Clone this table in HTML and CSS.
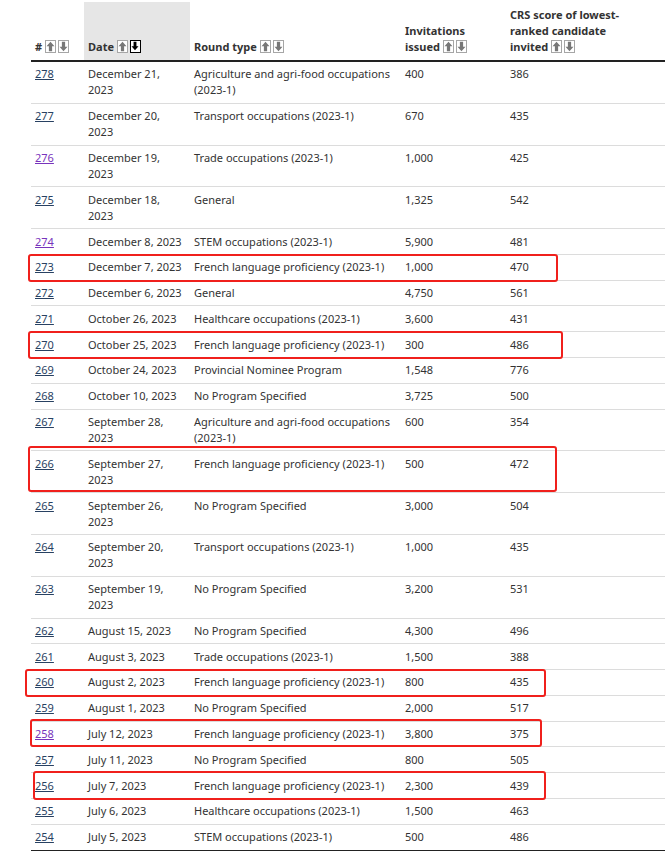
FILE: index.html
```html
<!DOCTYPE html>
<html lang="en">
<head>
<meta charset="utf-8">
<title>Rounds of invitations</title>
<link rel="stylesheet" href="styles.css">
</head>
<body>
<div class="page">
<table class="rounds">
  <colgroup>
    <col class="c-num"><col class="c-date"><col class="c-type"><col class="c-inv"><col class="c-crs">
  </colgroup>
  <thead>
    <tr>
      <th>#<span class="sorts"><span class="sort"><svg viewBox="0 0 10 12"><path d="M5 0.8 L9.4 5.6 H6.8 V11.2 H3.2 V5.6 H0.6 Z"/></svg></span><span class="sort"><svg viewBox="0 0 10 12"><path d="M5 11.2 L9.4 6.4 H6.8 V0.8 H3.2 V6.4 H0.6 Z"/></svg></span></span></th>
      <th class="sorted">Date<span class="sorts"><span class="sort"><svg viewBox="0 0 10 12"><path d="M5 0.8 L9.4 5.6 H6.8 V11.2 H3.2 V5.6 H0.6 Z"/></svg></span><span class="sort active"><svg viewBox="0 0 10 12"><path d="M5 11.2 L9.4 6.4 H6.8 V0.8 H3.2 V6.4 H0.6 Z"/></svg></span></span></th>
      <th>Round type<span class="sorts"><span class="sort"><svg viewBox="0 0 10 12"><path d="M5 0.8 L9.4 5.6 H6.8 V11.2 H3.2 V5.6 H0.6 Z"/></svg></span><span class="sort"><svg viewBox="0 0 10 12"><path d="M5 11.2 L9.4 6.4 H6.8 V0.8 H3.2 V6.4 H0.6 Z"/></svg></span></span></th>
      <th>Invitations issued<span class="sorts"><span class="sort"><svg viewBox="0 0 10 12"><path d="M5 0.8 L9.4 5.6 H6.8 V11.2 H3.2 V5.6 H0.6 Z"/></svg></span><span class="sort"><svg viewBox="0 0 10 12"><path d="M5 11.2 L9.4 6.4 H6.8 V0.8 H3.2 V6.4 H0.6 Z"/></svg></span></span></th>
      <th><div class="crs-head">CRS score of lowest-ranked candidate invited<span class="sorts"><span class="sort"><svg viewBox="0 0 10 12"><path d="M5 0.8 L9.4 5.6 H6.8 V11.2 H3.2 V5.6 H0.6 Z"/></svg></span><span class="sort"><svg viewBox="0 0 10 12"><path d="M5 11.2 L9.4 6.4 H6.8 V0.8 H3.2 V6.4 H0.6 Z"/></svg></span></span></div></th>
    </tr>
  </thead>
  <tbody>
    <tr><td><a href="#">278</a></td><td>December 21, 2023</td><td>Agriculture and agri-food occupations (2023-1)</td><td>400</td><td>386</td></tr>
    <tr><td><a href="#">277</a></td><td>December 20, 2023</td><td>Transport occupations (2023-1)</td><td>670</td><td>435</td></tr>
    <tr><td><a href="#" class="visited">276</a></td><td>December 19, 2023</td><td>Trade occupations (2023-1)</td><td>1,000</td><td>425</td></tr>
    <tr><td><a href="#">275</a></td><td>December 18, 2023</td><td>General</td><td>1,325</td><td>542</td></tr>
    <tr><td><a href="#" class="visited">274</a></td><td>December 8, 2023</td><td>STEM occupations (2023-1)</td><td>5,900</td><td>481</td></tr>
    <tr><td><a href="#">273</a></td><td>December 7, 2023</td><td>French language proficiency (2023-1)</td><td>1,000</td><td>470</td></tr>
    <tr><td><a href="#">272</a></td><td>December 6, 2023</td><td>General</td><td>4,750</td><td>561</td></tr>
    <tr><td><a href="#">271</a></td><td>October 26, 2023</td><td>Healthcare occupations (2023-1)</td><td>3,600</td><td>431</td></tr>
    <tr><td><a href="#">270</a></td><td>October 25, 2023</td><td>French language proficiency (2023-1)</td><td>300</td><td>486</td></tr>
    <tr><td><a href="#">269</a></td><td>October 24, 2023</td><td>Provincial Nominee Program</td><td>1,548</td><td>776</td></tr>
    <tr><td><a href="#">268</a></td><td>October 10, 2023</td><td>No Program Specified</td><td>3,725</td><td>500</td></tr>
    <tr><td><a href="#">267</a></td><td>September 28, 2023</td><td>Agriculture and agri-food occupations (2023-1)</td><td>600</td><td>354</td></tr>
    <tr><td><a href="#">266</a></td><td>September 27, 2023</td><td>French language proficiency (2023-1)</td><td>500</td><td>472</td></tr>
    <tr><td><a href="#">265</a></td><td>September 26, 2023</td><td>No Program Specified</td><td>3,000</td><td>504</td></tr>
    <tr><td><a href="#">264</a></td><td>September 20, 2023</td><td>Transport occupations (2023-1)</td><td>1,000</td><td>435</td></tr>
    <tr><td><a href="#">263</a></td><td>September 19, 2023</td><td>No Program Specified</td><td>3,200</td><td>531</td></tr>
    <tr><td><a href="#">262</a></td><td>August 15, 2023</td><td>No Program Specified</td><td>4,300</td><td>496</td></tr>
    <tr><td><a href="#">261</a></td><td>August 3, 2023</td><td>Trade occupations (2023-1)</td><td>1,500</td><td>388</td></tr>
    <tr><td><a href="#">260</a></td><td>August 2, 2023</td><td>French language proficiency (2023-1)</td><td>800</td><td>435</td></tr>
    <tr><td><a href="#">259</a></td><td>August 1, 2023</td><td>No Program Specified</td><td>2,000</td><td>517</td></tr>
    <tr><td><a href="#" class="visited">258</a></td><td>July 12, 2023</td><td>French language proficiency (2023-1)</td><td>3,800</td><td>375</td></tr>
    <tr><td><a href="#">257</a></td><td>July 11, 2023</td><td>No Program Specified</td><td>800</td><td>505</td></tr>
    <tr><td><a href="#">256</a></td><td>July 7, 2023</td><td>French language proficiency (2023-1)</td><td>2,300</td><td>439</td></tr>
    <tr><td><a href="#">255</a></td><td>July 6, 2023</td><td>Healthcare occupations (2023-1)</td><td>1,500</td><td>463</td></tr>
    <tr><td><a href="#">254</a></td><td>July 5, 2023</td><td>STEM occupations (2023-1)</td><td>500</td><td>486</td></tr>
  </tbody>
</table>
<div class="mark mark-1"></div>
<div class="mark mark-2"></div>
<div class="mark mark-3"></div>
<div class="mark mark-4"></div>
<div class="mark mark-5"></div>
<div class="mark mark-6"></div>
</div>
</body>
</html>
```

FILE: styles.css
```css
html, body {
  margin: 0;
  padding: 0;
  background: #fff;
}
.page {
  position: relative;
  width: 665px;
  height: 858px;
  overflow: hidden;
  font-family: "Noto Sans", "Open Sans", sans-serif;
  font-size: 11px;
  line-height: 16px;
  color: #333;
}
.rounds {
  margin: 2px 0 0 31px;
  border-collapse: collapse;
  table-layout: fixed;
  width: 640px;
}
.c-num { width: 53px; }
.c-date { width: 106px; }
.c-type { width: 211px; }
.c-inv { width: 105px; }
.c-crs { width: 165px; }
.rounds th {
  text-align: left;
  vertical-align: bottom;
  font-weight: 700;
  padding: 5px 4px 5px;
  border-bottom: 2px solid #222;
}
.rounds th.sorted {
  background: #e6e6e6;
}
.crs-head {
  max-width: 122px;
}
.sorts {
  display: inline-flex;
  gap: 2px;
  margin-left: 3px;
  vertical-align: -2px;
}
.sort {
  display: inline-block;
  box-sizing: border-box;
  width: 11px;
  height: 13px;
  border: 1px solid #a6a6a6;
  background: #fff;
}
.sort svg {
  display: block;
  width: 9px;
  height: 11px;
  fill: #777;
}
.sort.active {
  border: 1.5px solid #000;
}
.sort.active svg {
  fill: #000;
  width: 8px;
  height: 10px;
}
.rounds td {
  vertical-align: top;
  padding: 4.4px 4px 4.4px;
  border-bottom: 1px solid #dcdcdc;
}
.rounds tbody tr:last-child td {
  border-bottom: 1px solid #222;
}
.rounds a {
  color: #284162;
  text-decoration: underline;
}
.rounds a.visited {
  color: #7834bc;
}
.mark {
  position: absolute;
  box-sizing: border-box;
  border: 2px solid #f0201c;
  border-radius: 3px;
}
.mark-1 { left: 28px; top: 254px; width: 530px; height: 28px; }
.mark-2 { left: 28px; top: 331px; width: 535px; height: 28px; }
.mark-3 { left: 28px; top: 446px; width: 529px; height: 46px; }
.mark-4 { left: 25px; top: 669px; width: 521px; height: 28px; }
.mark-5 { left: 30px; top: 719px; width: 512px; height: 28px; }
.mark-6 { left: 33px; top: 771px; width: 513px; height: 29px; }
```
